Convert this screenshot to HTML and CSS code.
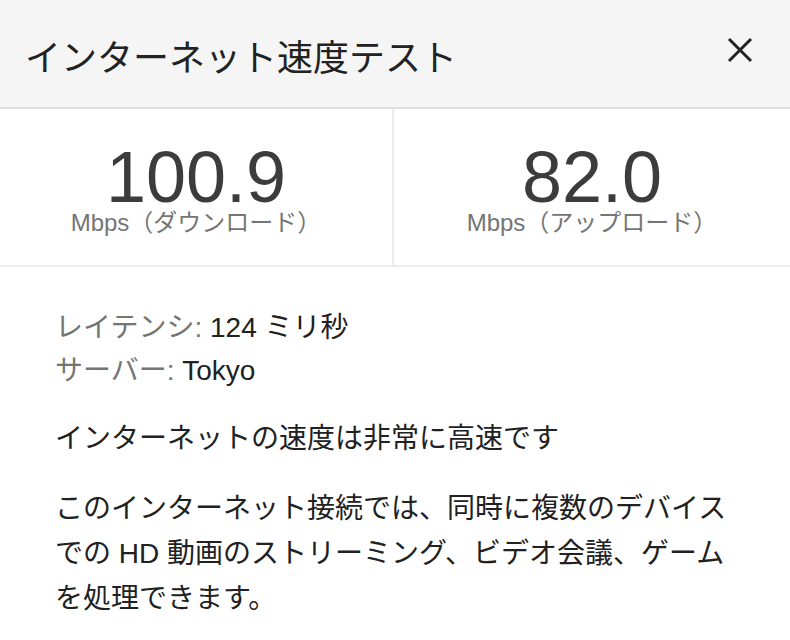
FILE: index.html
```html
<!DOCTYPE html>
<html lang="ja">
<head>
<meta charset="utf-8">
<link rel="stylesheet" href="styles.css">
</head>
<body>
<div class="dialog">
  <header class="header">
    <h1 class="title">インターネット速度テスト</h1>
    <button class="close" aria-label="閉じる">
      <svg width="26" height="26" viewBox="0 0 26 26"><path d="M2 2 L24 24 M24 2 L2 24" stroke="#222" stroke-width="3" fill="none"/></svg>
    </button>
  </header>
  <section class="stats">
    <div class="stat">
      <div class="num">100.9</div>
      <div class="unit">Mbps（ダウンロード）</div>
    </div>
    <div class="stat">
      <div class="num">82.0</div>
      <div class="unit">Mbps（アップロード）</div>
    </div>
  </section>
  <section class="details">
    <div class="meta">
      <div><span class="label">レイテンシ:</span> 124 ミリ秒</div>
      <div><span class="label">サーバー:</span> Tokyo</div>
    </div>
    <p class="summary">インターネットの速度は非常に高速です</p>
    <p class="desc">このインターネット接続では、同時に複数のデバイスでの HD 動画のストリーミング、ビデオ会議、ゲームを処理できます。</p>
  </section>
</div>
</body>
</html>
```

FILE: styles.css
```css
html, body {
  margin: 0;
  padding: 0;
  background: #ffffff;
}
body {
  font-family: "Liberation Sans", "Noto Sans CJK JP", sans-serif;
  color: #212121;
}
.dialog {
  width: 790px;
}
.header {
  height: 107px;
  background: #f5f5f5;
  border-bottom: 2px solid #dedede;
  display: flex;
  justify-content: space-between;
  align-items: flex-start;
  padding: 0 37px 0 25px;
  box-sizing: content-box;
}
.title {
  margin: 41px 0 0 0;
  font-size: 36px;
  line-height: 36px;
  font-weight: normal;
  color: #222222;
}
.close {
  margin-top: 37px;
  padding: 0;
  border: 0;
  background: transparent;
  width: 26px;
  height: 26px;
  display: block;
}
.close svg {
  display: block;
}
.stats {
  display: grid;
  grid-template-columns: 394px 1fr;
  height: 156px;
  border-bottom: 2px solid #ebebeb;
}
.stat {
  text-align: center;
  padding-top: 35px;
}
.stat:first-child {
  border-right: 2px solid #ebebeb;
}
.num {
  font-size: 72px;
  line-height: 66px;
  color: #3c3c3c;
}
.unit {
  margin-top: 1px;
  font-size: 24px;
  line-height: 24px;
  color: #757575;
}
.details {
  padding: 39px 55px 0 55px;
  font-size: 28px;
}
.meta {
  line-height: 43px;
}
.label {
  color: #757575;
}
.summary {
  margin: 24px 0 0 0;
  line-height: 45px;
}
.desc {
  margin: 25px 0 0 0;
  line-height: 45px;
}
```
